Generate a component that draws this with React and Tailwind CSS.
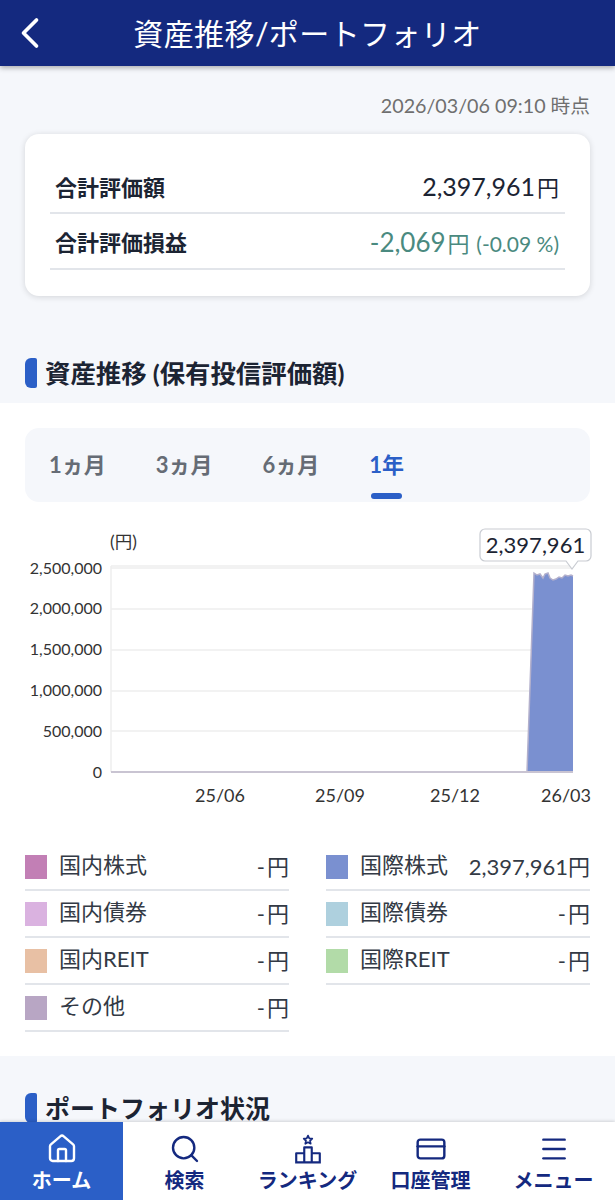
import React from 'react';
import { ChevronLeft, House, Search, CreditCard, Menu } from 'lucide-react';

const legend = [
  [
    { name: '国内株式', value: '-', color: 'bg-[#c27fb5]' },
    { name: '国内債券', value: '-', color: 'bg-[#dab2e0]' },
    { name: '国内REIT', value: '-', color: 'bg-[#e8c0a4]' },
    { name: 'その他', value: '-', color: 'bg-[#b8a6c4]' },
  ],
  [
    { name: '国際株式', value: '2,397,961', color: 'bg-[#7a90d0]' },
    { name: '国際債券', value: '-', color: 'bg-[#aed0de]' },
    { name: '国際REIT', value: '-', color: 'bg-[#b2dba8]' },
  ],
];

const yLabels = [
  ['2,500,000', 574],
  ['2,000,000', 614],
  ['1,500,000', 655],
  ['1,000,000', 696],
  ['500,000', 737],
  ['0', 778],
];

const xLabels = [
  ['25/06', 220],
  ['25/09', 340],
  ['25/12', 455],
  ['26/03', 566],
];

const RankingIcon = () => (
  <svg width="30" height="30" viewBox="0 0 28 28" fill="none" stroke="currentColor" strokeWidth="2">
    <path d="M14 1.5l1.2 2.6 2.8.3-2.1 1.9.6 2.8-2.5-1.4-2.5 1.4.6-2.8-2.1-1.9 2.8-.3z" strokeWidth="1.6" strokeLinejoin="round" />
    <path d="M2 26.5h24M3 26.5V18h7.5M25 26.5V18h-7.5M10.5 26.5V12.5h7v14" strokeLinejoin="round" />
  </svg>
);

const nav = [
  { label: 'ホーム', icon: <House className="w-[32px] h-[32px]" strokeWidth={1.8} />, active: true },
  { label: '検索', icon: <Search className="w-[32px] h-[32px]" strokeWidth={1.8} /> },
  { label: 'ランキング', icon: <RankingIcon /> },
  { label: '口座管理', icon: <CreditCard className="w-[32px] h-[32px]" strokeWidth={1.8} /> },
  { label: 'メニュー', icon: <Menu className="w-[32px] h-[32px]" strokeWidth={1.8} /> },
];

const SectionTitle = ({ children, size }) => (
  <div className="flex items-center gap-2 pl-[25px]">
    <span className="w-[12px] h-[30px] rounded-l-md rounded-r-[2px] bg-[#2b5fc7]" />
    <h2 className={`font-bold text-[#1c2433] leading-[30px] ${size}`}>{children}</h2>
  </div>
);

const Chart = () => (
  <svg width="615" height="300" viewBox="0 510 615 300" className="block">
    <g stroke="#eeeeee" strokeWidth="1.5">
      <line x1="111" y1="566" x2="573" y2="566" />
      <line x1="111" y1="568" x2="573" y2="568" />
      <line x1="111" y1="609" x2="573" y2="609" />
      <line x1="111" y1="650" x2="573" y2="650" />
      <line x1="111" y1="691" x2="573" y2="691" />
      <line x1="111" y1="731" x2="573" y2="731" />
      <line x1="111" y1="566" x2="111" y2="772" />
    </g>
    <path
      d="M527 772L534 573L537 575L540 574L543 578L545 574L548 573L550 578L553 580L556 579L559 577L562 578L565 575L568 576L571 575L573 576V772Z"
      fill="#7a90d0"
    />
    <path
      d="M527 772L534 573L537 575L540 574L543 578L545 574L548 573L550 578L553 580L556 579L559 577L562 578L565 575L568 576L571 575L573 576"
      fill="none"
      stroke="#b3b0cc"
      strokeWidth="1.5"
    />
    <line x1="111" y1="772" x2="573" y2="772" stroke="#c9c4d2" strokeWidth="2" />
    <g fontFamily="Lato, 'Noto Sans CJK JP', sans-serif" fontSize="16" fill="#333333">
      <text x="110" y="548" fontSize="17.5">(円)</text>
      {yLabels.map(([label, y]) => (
        <text key={label} x="102" y={y} textAnchor="end">{label}</text>
      ))}
      {xLabels.map(([label, x]) => (
        <text key={label} x={x} y="802" textAnchor="middle" fontSize="18">{label}</text>
      ))}
    </g>
    <path
      d="M485 529H586a5 5 0 0 1 5 5V556a5 5 0 0 1-5 5H578L572 569L566 561H485a5 5 0 0 1-5-5V534a5 5 0 0 1 5-5Z"
      fill="#ffffff"
      stroke="#c9ccd2"
      strokeWidth="1.2"
    />
    <text x="535.5" y="553" textAnchor="middle" fontFamily="Lato, sans-serif" fontSize="22" fill="#1c2433">2,397,961</text>
  </svg>
);

export default function App() {
  return (
    <div className="w-[615px] h-[1200px] flex flex-col overflow-hidden bg-[#f5f7fb] font-['Lato','Noto_Sans_CJK_JP',sans-serif]">
      <header className="relative z-10 h-[66px] shrink-0 flex items-center justify-center bg-[#14297f] text-white shadow-[0_2px_5px_rgba(0,0,0,0.3)]">
        <ChevronLeft className="absolute left-[4px] top-[7px] w-[52px] h-[52px]" strokeWidth={1.7} />
        <h1 className="text-[30px] leading-none tracking-[0.4px]">資産推移/ポートフォリオ</h1>
      </header>

      <main className="flex-1 overflow-hidden">
        <p className="pt-[27px] pr-[25px] text-right text-[19.7px] leading-[26px] text-[#6f6f6f]">2026/03/06 09:10 時点</p>

        <section className="mx-[25px] mt-[15px] h-[162px] rounded-[14px] bg-white px-[25px] pt-[25px] shadow-[0_1px_6px_rgba(0,0,0,0.14)]">
          <div className="h-[55px] flex items-center justify-between pl-[5px] pr-[6px] pt-[3px] border-b-2 border-[#e2e5ea]">
            <span className="text-[22px] font-bold text-[#1c2433]">合計評価額</span>
            <span className="text-[25px] text-[#1c2433]">2,397,961<span className="ml-[2px] text-[22px]">円</span></span>
          </div>
          <div className="h-[56px] flex items-center justify-between pl-[5px] pr-[6px] pt-[3px] border-b-2 border-[#e2e5ea]">
            <span className="text-[22px] font-bold text-[#1c2433]">合計評価損益</span>
            <span className="text-[26px] text-[#4a8a80]">-2,069<span className="ml-[2px] text-[22px]">円</span> <span className="text-[21px]">(-0.09 %)</span></span>
          </div>
        </section>

        <div className="mt-[62px]">
          <SectionTitle size="text-[25.4px]">資産推移 (保有投信評価額)</SectionTitle>
        </div>

        <section className="mt-[15px] h-[653px] bg-white pt-[25px]">
          <div className="mx-[25px] h-[74px] rounded-[14px] bg-[#f5f7fb] flex pl-[24px] gap-[50px] text-[22px] font-bold text-[#666c75]">
            <span className="leading-[74px]">1ヵ月</span>
            <span className="leading-[74px]">3ヵ月</span>
            <span className="leading-[74px]">6ヵ月</span>
            <span className="relative leading-[74px] text-[#2b5fc7]">
              1年
              <span className="absolute left-[2px] right-[2px] bottom-[3px] h-[6px] rounded-full bg-[#2b5fc7]" />
            </span>
          </div>

          <div className="mt-[8px]">
            <Chart />
          </div>

          <div className="mt-[34px] px-[25px] flex gap-[37px]">
            {legend.map((col, i) => (
              <div key={i} className="flex-1">
                {col.map((row) => (
                  <div key={row.name} className="h-[47px] flex items-center border-b-2 border-[#e2e5ea] text-[22px] text-[#333a45]">
                    <span className={`w-[22px] h-[24px] shrink-0 ${row.color}`} />
                    <span className="ml-[12px] flex-1 -translate-y-[2px]">{row.name}</span>
                    <span>{row.value}<span className={row.value === '-' ? 'ml-[2px]' : ''}>円</span></span>
                  </div>
                ))}
              </div>
            ))}
          </div>
        </section>

        <div className="mt-[37px]">
          <SectionTitle size="text-[25px]">ポートフォリオ状況</SectionTitle>
        </div>
      </main>

      <nav className="relative z-10 h-[78px] shrink-0 grid grid-cols-5 bg-white text-[#14297f] shadow-[0_-1px_3px_rgba(0,0,0,0.15)]">
        {nav.map((item) => (
          <div
            key={item.label}
            className={`flex flex-col items-center pt-[11px] ${item.active ? 'bg-[#2b5fc7] text-white' : ''}`}
          >
            <div className="h-[32px] flex items-center justify-center">{item.icon}</div>
            <span className="mt-[1px] text-[20px] font-bold leading-[28px] whitespace-nowrap">{item.label}</span>
          </div>
        ))}
      </nav>
    </div>
  );
}
